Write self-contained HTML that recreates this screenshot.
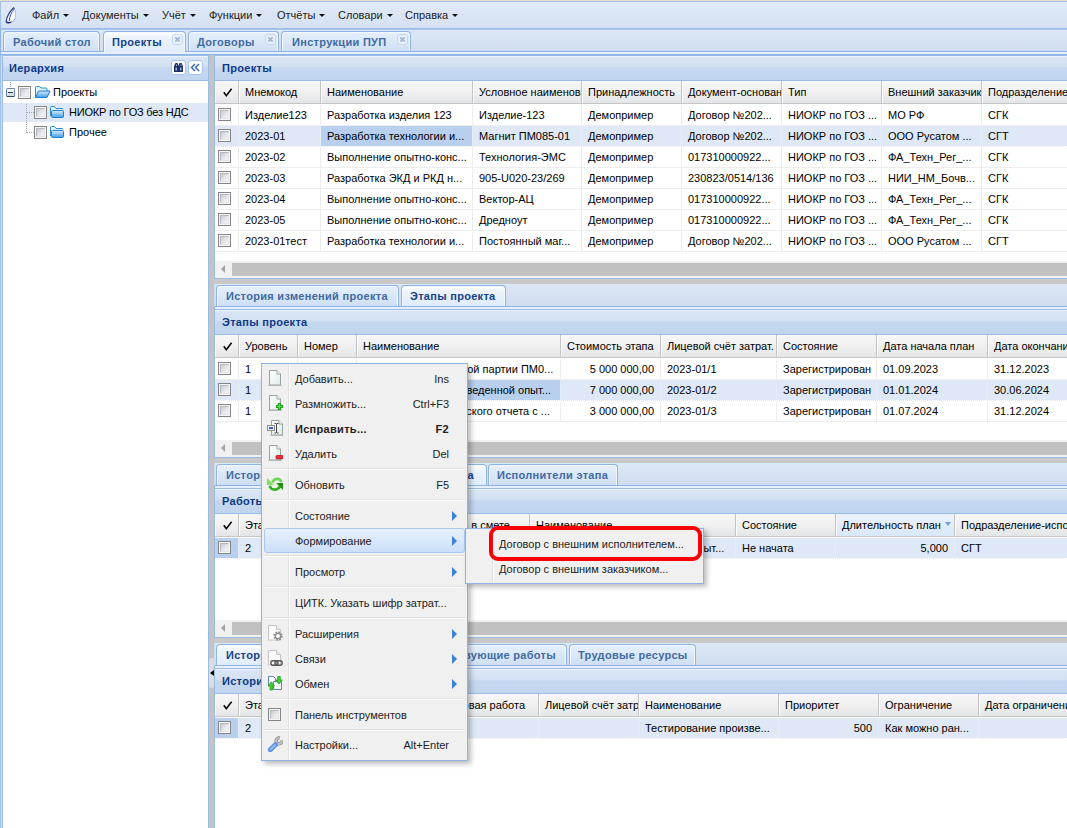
<!DOCTYPE html><html lang="ru"><head><meta charset="utf-8"><title>Проекты</title><style>
*{box-sizing:border-box;margin:0;padding:0}
html,body{width:1067px;height:828px;overflow:hidden}
body{position:relative;background:#dfe8f6;font:11px "Liberation Sans",sans-serif;color:#000}
.a{position:absolute}
.t{position:absolute;white-space:nowrap;line-height:14px;height:14px}
.b{font-weight:bold;letter-spacing:.3px}
.hd{position:absolute;border:1px solid #99bbe8;box-shadow:inset 0 1px 0 #edf3fc;background:linear-gradient(#dae6f5 0,#d3e1f3 42%,#c5d8f0 50%,#c1d5ee 100%);}
.hd .t{color:#0f3a85;font-weight:bold;letter-spacing:.3px;font-size:11px}
.gh{position:absolute;background:linear-gradient(#f7f7f7 0,#f0f0f0 50%,#e4e5e7 100%);border-bottom:1px solid #c6c6c6;overflow:hidden}
.gh .c{position:absolute;top:0;height:100%;border-right:1px solid #c4c4c4;border-left:1px solid #fbfbfb;overflow:hidden}
.gh .c span{position:absolute;left:5px;top:4px;white-space:nowrap;line-height:14px}
.row{position:absolute;left:0;height:21px;border-bottom:1px solid #ededed;background:#fff;overflow:hidden}
.row.sel{background:#dfe8f6;border-bottom:1px dotted #fff}
.cell{position:absolute;top:0;height:21px;overflow:hidden;white-space:nowrap;line-height:14px;padding:3px 0 0 6px;border-right:1px solid #ededed}
.row.sel .cell{border-right-color:#e6edf8}
.cell.r{text-align:right;padding-right:6px}
.cell.cs{background:#b8cfee}
.cb{position:absolute;width:13px;height:13px;border:1px solid #858585;background:#f6f6f6}
.cb:after{content:"";position:absolute;left:1px;top:1px;right:1px;bottom:1px;background:linear-gradient(135deg,#c6cbd2 0,#e4e6ea 55%,#f7f7f7 100%);border:1px solid;border-color:#b4b9c0 #e2e4e8 #e2e4e8 #b4b9c0}
.sb{position:absolute;background:#f1f1f1;height:17px}
.sb i{position:absolute;top:2px;height:13px;background:#c1c1c1}
.sb b{position:absolute;left:6px;top:4px;width:0;height:0;border:4px solid transparent;border-right:4.500px solid #a3a3a3;border-left:0}
.tabstrip{position:absolute;background:linear-gradient(#dde8f6,#d0ddf0);border-bottom:1px solid #8db2e3}
.tab{position:absolute;border:1px solid #8db2e3;border-bottom:0;border-radius:4px 4px 0 0;background:linear-gradient(#e6f0fc 0,#dce9f9 40%,#cfdff4 100%);box-shadow:inset 1px 1px 0 #f4f9ff,inset -1px 0 0 #f4f9ff}
.tab.act{background:linear-gradient(#fff 0,#ecf3fc 30%,#deecfd 100%)}
.tab .t{color:#416aa3;font-weight:bold;letter-spacing:.3px}
.tab.act .t{color:#15428b}
.menu{position:absolute;background:#f0f0f0;border:1px solid #8fb2e6;box-shadow:3px 3px 5px rgba(0,0,0,.26)}
.menu .gut{position:absolute;left:26px;top:1px;bottom:1px;width:2px;border-left:1px solid #e0e0e0;border-right:1px solid #fff}
.menu .sep{position:absolute;left:2px;right:2px;height:2px;border-top:1px solid #e0e0e0;border-bottom:1px solid #fff}
.menu .t{color:#222}
.arr{position:absolute;width:0;height:0;border:5px solid transparent;border-left:5.500px solid #3f7fd6;border-right:0}
</style></head><body>
<svg width="0" height="0" style="position:absolute"><defs><linearGradient id="pg" x1="0" y1="0" x2="1" y2="1"><stop offset="0" stop-color="#fff"/><stop offset="1" stop-color="#dfe9e9"/></linearGradient><linearGradient id="fo" x1="0" y1="0" x2="0" y2="1"><stop offset="0" stop-color="#d9eefc"/><stop offset="1" stop-color="#3f9ce8"/></linearGradient></defs></svg>
<div class="a" style="left:0;top:0;width:1067px;height:1px;background:#e9dfc9"></div>
<div class="a" style="left:0;top:29px;width:1px;height:799px;background:#a3c0e8"></div><div class="a" style="left:1px;top:55px;width:1px;height:773px;background:#cfdff5"></div>
<div class="a" style="left:0;top:1px;width:1067px;height:28px;background:linear-gradient(#e0e9f6,#d5e1f2);border-bottom:1px solid #9dbbe8;border-top:1px solid #a5c1ea;border-left:1px solid #a3c0e8"></div>
<svg class="a" style="left:5px;top:6px" width="12" height="18" viewBox="0 0 12 18"><path d="M9 1.500C5 5 2 10 1 15.500c2 1.500 5 1 9-2.500 .5-4 .5-8-1-11.500z" fill="#fbfcfe"/><path d="M9 1.500c1.800 3.500 1.800 7.500 1 11.500" fill="none" stroke="#b4bccb" stroke-width=".9"/><path d="M6 16c2-.5 3-1.500 4-3" fill="none" stroke="#7f8ccc" stroke-width=".9"/><path d="M9 1.500C5 5 2 10 1 15.500" fill="none" stroke="#2b3f92" stroke-width="1.200"/><path d="M9.500 2.500C6.500 6 4.500 10.500 4.200 15" fill="none" stroke="#3a55a5" stroke-width="1"/><path d="M1 15.500c1.500 1.600 3.800 1.300 5 .5" fill="none" stroke="#14208a" stroke-width="1.500"/></svg>
<div class="t" style="left:32px;top:8px;color:#222">Файл<i style="display:inline-block;width:0;height:0;border:3px solid transparent;border-top:3px solid #111;border-bottom:0;margin-left:4px;position:relative;top:-2px"></i></div>
<div class="t" style="left:82px;top:8px;color:#222">Документы<i style="display:inline-block;width:0;height:0;border:3px solid transparent;border-top:3px solid #111;border-bottom:0;margin-left:4px;position:relative;top:-2px"></i></div>
<div class="t" style="left:162px;top:8px;color:#222">Учёт<i style="display:inline-block;width:0;height:0;border:3px solid transparent;border-top:3px solid #111;border-bottom:0;margin-left:4px;position:relative;top:-2px"></i></div>
<div class="t" style="left:209px;top:8px;color:#222">Функции<i style="display:inline-block;width:0;height:0;border:3px solid transparent;border-top:3px solid #111;border-bottom:0;margin-left:4px;position:relative;top:-2px"></i></div>
<div class="t" style="left:277px;top:8px;color:#222">Отчёты<i style="display:inline-block;width:0;height:0;border:3px solid transparent;border-top:3px solid #111;border-bottom:0;margin-left:4px;position:relative;top:-2px"></i></div>
<div class="t" style="left:338px;top:8px;color:#222">Словари<i style="display:inline-block;width:0;height:0;border:3px solid transparent;border-top:3px solid #111;border-bottom:0;margin-left:4px;position:relative;top:-2px"></i></div>
<div class="t" style="left:405px;top:8px;color:#222">Справка<i style="display:inline-block;width:0;height:0;border:3px solid transparent;border-top:3px solid #111;border-bottom:0;margin-left:4px;position:relative;top:-2px"></i></div>
<div class="tabstrip" style="left:0;top:29px;width:1067px;height:23px;border-left:1px solid #8db2e3;border-top:1px solid #a9c4ea"></div>
<div class="a" style="left:0;top:52px;width:1067px;height:3px;background:#e6f0fd;border-left:1px solid #8db2e3;border-bottom:1px solid #8fb3e4"></div>
<div class="tab" style="left:3px;top:31px;width:97px;height:20px"><div class="t" style="left:9px;top:3px">Рабочий стол</div></div>
<div class="tab act" style="left:103px;top:31px;width:83px;height:21px"><div class="t" style="left:8px;top:3px">Проекты</div><svg class="a" style="right:2px;top:2px" width="11" height="11" viewBox="0 0 11 11"><rect x=".5" y=".5" width="10" height="10" rx="2.500" fill="#eaf1fb" stroke="#c3d6ee"/><path d="M3.300 3.300l4.400 4.400M7.700 3.300l-4.400 4.400" stroke="#9db6d8" stroke-width="1.700"/></svg></div>
<div class="tab" style="left:188px;top:31px;width:91px;height:20px"><div class="t" style="left:8px;top:3px">Договоры</div><svg class="a" style="right:2px;top:2px" width="11" height="11" viewBox="0 0 11 11"><rect x=".5" y=".5" width="10" height="10" rx="2.500" fill="#eaf1fb" stroke="#c3d6ee"/><path d="M3.300 3.300l4.400 4.400M7.700 3.300l-4.400 4.400" stroke="#9db6d8" stroke-width="1.700"/></svg></div>
<div class="tab" style="left:281px;top:31px;width:130px;height:20px"><div class="t" style="left:10px;top:3px">Инструкции ПУП</div><svg class="a" style="right:2px;top:2px" width="11" height="11" viewBox="0 0 11 11"><rect x=".5" y=".5" width="10" height="10" rx="2.500" fill="#eaf1fb" stroke="#c3d6ee"/><path d="M3.300 3.300l4.400 4.400M7.700 3.300l-4.400 4.400" stroke="#9db6d8" stroke-width="1.700"/></svg></div>
<div class="hd" style="left:2px;top:55px;width:207px;height:26px"><div class="t" style="left:6px;top:5px">Иерархия</div>
<svg class="a" style="left:168px;top:4px" width="15" height="15" viewBox="0 0 15 15"><rect x=".5" y=".5" width="14" height="14" rx="2.500" fill="#fff" stroke="#a4c2ec"/><path d="M4.500 3h2l1 3v6h-4.500V6zM8.500 3h2l1.500 3v6H7.500V6z" fill="#1f2f5e"/><path d="M4.500 7.500h1.500v3h-1.500zM9 7.500h1.500v3H9zM5 4.500h1v1.500H5zM9.500 4.500h1v1.500h-1z" fill="#9bb5f0"/></svg>
<svg class="a" style="left:185px;top:4px" width="15" height="15" viewBox="0 0 15 15"><rect x=".5" y=".5" width="14" height="14" rx="2.500" fill="#fff" stroke="#a4c2ec"/><path d="M7 4l-3.500 3.500L7 11M11 4l-3.500 3.500L11 11" fill="none" stroke="#2f62b0" stroke-width="1.400"/></svg>
</div>
<div class="a" style="left:2px;top:81px;width:207px;height:747px;background:#fff;border-left:1px solid #99bbe8;border-right:1px solid #99bbe8"></div>
<div class="a" style="left:3px;top:103px;width:205px;height:19px;background:#dfe8f6"></div>
<div class="a" style="left:10px;top:82px;width:0;height:5px;border-left:1px dotted #aaa"></div>
<div class="a" style="left:6px;top:88px;width:9px;height:9px;border:1px solid #6f86ab;border-bottom-color:#2f4777;border-radius:1.500px;background:linear-gradient(#fff,#cdd7e6)"><div class="a" style="left:1px;top:3px;width:5px;height:1px;background:#223a63"></div></div>
<div class="cb" style="left:18px;top:86px"></div>
<svg class="a" style="left:34px;top:85px" width="17" height="14" viewBox="0 0 17 14"><path d="M1.500 12V2.500c0-.6.400-1 1-1h3l1.500 1.500h5c.6 0 1 .4 1 1v2" fill="#e8f4fd" stroke="#2b8bd8"/><path d="M1.500 12.500L4.500 6h11.500l-3 6.500z" fill="url(#fo)" stroke="#1d7fd0" stroke-linejoin="round"/></svg>
<div class="t" style="left:53px;top:85px">Проекты</div>
<div class="a" style="left:26px;top:104px;width:0;height:29px;border-left:1px dotted #aaa"></div>
<div class="a" style="left:26px;top:112px;width:8px;height:0;border-top:1px dotted #aaa"></div>
<div class="a" style="left:26px;top:132px;width:8px;height:0;border-top:1px dotted #aaa"></div>
<div class="cb" style="left:34px;top:106px"></div>
<svg class="a" style="left:49px;top:105px" width="16" height="14" viewBox="0 0 16 14"><path d="M1.500 11V2.500c0-.6.400-1 1-1h3l1.500 2h6c.6 0 1 .4 1 1" fill="#e8f4fd" stroke="#2b8bd8"/><rect x="2.500" y="5.500" width="12" height="7" rx="1.200" fill="url(#fo)" stroke="#1d7fd0"/></svg>
<div class="t" style="left:69px;top:105px;letter-spacing:-.2px">НИОКР по ГОЗ без НДС</div>
<div class="cb" style="left:34px;top:126px"></div>
<svg class="a" style="left:49px;top:125px" width="16" height="14" viewBox="0 0 16 14"><path d="M1.500 11V2.500c0-.6.400-1 1-1h3l1.500 2h6c.6 0 1 .4 1 1" fill="#e8f4fd" stroke="#2b8bd8"/><rect x="2.500" y="5.500" width="12" height="7" rx="1.200" fill="url(#fo)" stroke="#1d7fd0"/></svg>
<div class="t" style="left:69px;top:125px">Прочее</div>
<div class="a" style="left:209px;top:55px;width:5px;height:773px;background:#c4c4c4"></div>
<div class="a" style="left:209px;top:658px;width:5px;height:30px;background:#dcdcdc;border-radius:2px"></div><div class="a" style="left:210px;top:670px;width:0;height:0;border:3.500px solid transparent;border-right:4px solid #000;border-left:0"></div>
<div class="hd" style="left:214px;top:55px;width:860px;height:26px"><div class="t" style="left:7px;top:5px">Проекты</div></div>
<div class="a" style="left:214px;top:81px;width:860px;height:198px;background:#fff;border-left:1px solid #99bbe8;border-bottom:1px solid #99bbe8;overflow:hidden">
<div class="gh" style="left:0;top:0px;width:860px;height:23px"><div class="c" style="left:0px;width:24px"><svg class="a" style="left:6px;top:6px" width="11" height="11" viewBox="0 0 11 11"><path d="M1.800 5.200L4.300 8.800 9.600 1.800" fill="none" stroke="#000" stroke-width="1.500"/></svg></div><div class="c" style="left:24px;width:82px"><span>Мнемокод</span></div><div class="c" style="left:106px;width:152px"><span>Наименование</span></div><div class="c" style="left:258px;width:109px"><span>Условное наименова</span></div><div class="c" style="left:367px;width:100px"><span>Принадлежность</span></div><div class="c" style="left:467px;width:100px"><span>Документ-основан</span></div><div class="c" style="left:567px;width:100px"><span>Тип</span></div><div class="c" style="left:667px;width:100px"><span>Внешний заказчик</span></div><div class="c" style="left:767px;width:101px"><span>Подразделение</span></div></div>
<div class="row" style="top:24px;width:860px"><div class="cell" style="left:0px;width:24px"><div class="cb" style="left:3px;top:3px"></div></div><div class="cell" style="left:24px;width:82px">Изделие123</div><div class="cell" style="left:106px;width:152px">Разработка изделия 123</div><div class="cell" style="left:258px;width:109px">Изделие-123</div><div class="cell" style="left:367px;width:100px">Демопример</div><div class="cell" style="left:467px;width:100px">Договор №202...</div><div class="cell" style="left:567px;width:100px">НИОКР по ГОЗ ...</div><div class="cell" style="left:667px;width:100px">МО РФ</div><div class="cell" style="left:767px;width:101px">СГК</div></div>
<div class="row sel" style="top:45px;width:860px"><div class="cell" style="left:0px;width:24px"><div class="cb" style="left:3px;top:3px"></div></div><div class="cell" style="left:24px;width:82px">2023-01</div><div class="cell cs" style="left:106px;width:152px">Разработка технологии и...</div><div class="cell" style="left:258px;width:109px">Магнит ПМ085-01</div><div class="cell" style="left:367px;width:100px">Демопример</div><div class="cell" style="left:467px;width:100px">Договор №202...</div><div class="cell" style="left:567px;width:100px">НИОКР по ГОЗ ...</div><div class="cell" style="left:667px;width:100px">ООО Русатом ...</div><div class="cell" style="left:767px;width:101px">СГТ</div></div>
<div class="row" style="top:66px;width:860px"><div class="cell" style="left:0px;width:24px"><div class="cb" style="left:3px;top:3px"></div></div><div class="cell" style="left:24px;width:82px">2023-02</div><div class="cell" style="left:106px;width:152px">Выполнение опытно-конс...</div><div class="cell" style="left:258px;width:109px">Технология-ЭМС</div><div class="cell" style="left:367px;width:100px">Демопример</div><div class="cell" style="left:467px;width:100px">017310000922...</div><div class="cell" style="left:567px;width:100px">НИОКР по ГОЗ ...</div><div class="cell" style="left:667px;width:100px">ФА_Техн_Рег_...</div><div class="cell" style="left:767px;width:101px">СГК</div></div>
<div class="row" style="top:87px;width:860px"><div class="cell" style="left:0px;width:24px"><div class="cb" style="left:3px;top:3px"></div></div><div class="cell" style="left:24px;width:82px">2023-03</div><div class="cell" style="left:106px;width:152px">Разработка ЭКД и РКД н...</div><div class="cell" style="left:258px;width:109px">905-U020-23/269</div><div class="cell" style="left:367px;width:100px">Демопример</div><div class="cell" style="left:467px;width:100px">230823/0514/136</div><div class="cell" style="left:567px;width:100px">НИОКР по ГОЗ ...</div><div class="cell" style="left:667px;width:100px">НИИ_НМ_Бочв...</div><div class="cell" style="left:767px;width:101px">СГК</div></div>
<div class="row" style="top:108px;width:860px"><div class="cell" style="left:0px;width:24px"><div class="cb" style="left:3px;top:3px"></div></div><div class="cell" style="left:24px;width:82px">2023-04</div><div class="cell" style="left:106px;width:152px">Выполнение опытно-конс...</div><div class="cell" style="left:258px;width:109px">Вектор-АЦ</div><div class="cell" style="left:367px;width:100px">Демопример</div><div class="cell" style="left:467px;width:100px">017310000922...</div><div class="cell" style="left:567px;width:100px">НИОКР по ГОЗ ...</div><div class="cell" style="left:667px;width:100px">ФА_Техн_Рег_...</div><div class="cell" style="left:767px;width:101px">СГК</div></div>
<div class="row" style="top:129px;width:860px"><div class="cell" style="left:0px;width:24px"><div class="cb" style="left:3px;top:3px"></div></div><div class="cell" style="left:24px;width:82px">2023-05</div><div class="cell" style="left:106px;width:152px">Выполнение опытно-конс...</div><div class="cell" style="left:258px;width:109px">Дредноут</div><div class="cell" style="left:367px;width:100px">Демопример</div><div class="cell" style="left:467px;width:100px">017310000922...</div><div class="cell" style="left:567px;width:100px">НИОКР по ГОЗ ...</div><div class="cell" style="left:667px;width:100px">ФА_Техн_Рег_...</div><div class="cell" style="left:767px;width:101px">СГК</div></div>
<div class="row" style="top:150px;width:860px"><div class="cell" style="left:0px;width:24px"><div class="cb" style="left:3px;top:3px"></div></div><div class="cell" style="left:24px;width:82px">2023-01тест</div><div class="cell" style="left:106px;width:152px">Разработка технологии и...</div><div class="cell" style="left:258px;width:109px">Постоянный маг...</div><div class="cell" style="left:367px;width:100px">Демопример</div><div class="cell" style="left:467px;width:100px">Договор №202...</div><div class="cell" style="left:567px;width:100px">НИОКР по ГОЗ ...</div><div class="cell" style="left:667px;width:100px">ООО Русатом ...</div><div class="cell" style="left:767px;width:101px">СГТ</div></div>
<div class="sb" style="left:0;top:180px;width:860px"><b></b><i style="left:17px;width:860px"></i></div>
</div>
<div class="a" style="left:214px;top:279px;width:860px;height:5px;background:#c8c8c8"></div>
<div class="tabstrip" style="left:214px;top:284px;width:860px;height:23px;border-left:1px solid #c9d9ef"></div>
<div class="a" style="left:214px;top:307px;width:860px;height:2px;background:#e6f0fd;border-left:1px solid #8db2e3"></div>
<div class="tab" style="left:216px;top:285px;width:183px;height:21px"><div class="t" style="left:9px;top:3px">История изменений проекта</div></div>
<div class="tab act" style="left:401px;top:285px;width:105px;height:21px"><div class="t" style="left:8px;top:3px">Этапы проекта</div></div>
<div class="hd" style="left:214px;top:309px;width:860px;height:26px"><div class="t" style="left:7px;top:5px">Этапы проекта</div></div>
<div class="a" style="left:214px;top:335px;width:860px;height:123px;background:#fff;border-left:1px solid #99bbe8;border-bottom:1px solid #99bbe8;overflow:hidden">
<div class="gh" style="left:0;top:0px;width:860px;height:23px"><div class="c" style="left:0px;width:24px"><svg class="a" style="left:6px;top:6px" width="11" height="11" viewBox="0 0 11 11"><path d="M1.800 5.200L4.300 8.800 9.600 1.800" fill="none" stroke="#000" stroke-width="1.500"/></svg></div><div class="c" style="left:24px;width:59px"><span>Уровень</span></div><div class="c" style="left:83px;width:59px"><span>Номер</span></div><div class="c" style="left:142px;width:204px"><span>Наименование</span></div><div class="c" style="left:346px;width:100px"><span>Стоимость этапа</span></div><div class="c" style="left:446px;width:116px"><span>Лицевой счёт затрат.</span></div><div class="c" style="left:562px;width:100px"><span>Состояние</span></div><div class="c" style="left:662px;width:111px"><span>Дата начала план</span></div><div class="c" style="left:773px;width:110px"><span>Дата окончани</span></div></div>
<div class="row" style="top:24px;width:860px"><div class="cell" style="left:0px;width:24px"><div class="cb" style="left:3px;top:3px"></div></div><div class="cell" style="left:24px;width:59px">1</div><div class="cell" style="left:83px;width:59px">1</div><div class="cell r" style="left:142px;width:204px;padding-right:8px">Изготовление опытной партии ПМ0...</div><div class="cell r" style="left:346px;width:100px">5 000 000,00</div><div class="cell" style="left:446px;width:116px">2023-01/1</div><div class="cell" style="left:562px;width:100px">Зарегистрирован</div><div class="cell" style="left:662px;width:111px">01.09.2023</div><div class="cell" style="left:773px;width:110px">31.12.2023</div></div>
<div class="row sel" style="top:45px;width:860px"><div class="cell" style="left:0px;width:24px"><div class="cb" style="left:3px;top:3px"></div></div><div class="cell" style="left:24px;width:59px">1</div><div class="cell" style="left:83px;width:59px">2</div><div class="cell cs r" style="left:142px;width:204px;padding-right:9px">Испытания произведенной опыт...</div><div class="cell r" style="left:346px;width:100px">7 000 000,00</div><div class="cell" style="left:446px;width:116px">2023-01/2</div><div class="cell" style="left:562px;width:100px">Зарегистрирован</div><div class="cell" style="left:662px;width:111px">01.01.2024</div><div class="cell" style="left:773px;width:110px">30.06.2024</div></div>
<div class="row" style="top:66px;width:860px"><div class="cell" style="left:0px;width:24px"><div class="cb" style="left:3px;top:3px"></div></div><div class="cell" style="left:24px;width:59px">1</div><div class="cell" style="left:83px;width:59px">3</div><div class="cell r" style="left:142px;width:204px;padding-right:10px">Разработка технического отчета с ...</div><div class="cell r" style="left:346px;width:100px">3 000 000,00</div><div class="cell" style="left:446px;width:116px">2023-01/3</div><div class="cell" style="left:562px;width:100px">Зарегистрирован</div><div class="cell" style="left:662px;width:111px">01.07.2024</div><div class="cell" style="left:773px;width:110px">31.12.2024</div></div>
<div class="sb" style="left:0;top:105px;width:860px"><b></b><i style="left:17px;width:860px"></i></div>
</div>
<div class="a" style="left:214px;top:458px;width:860px;height:5px;background:#c8c8c8"></div>
<div class="tabstrip" style="left:214px;top:463px;width:860px;height:23px;border-left:1px solid #c9d9ef"></div>
<div class="a" style="left:214px;top:486px;width:860px;height:2px;background:#e6f0fd;border-left:1px solid #8db2e3"></div>
<div class="tab" style="left:216px;top:464px;width:175px;height:21px"><div class="t" style="left:9px;top:3px">История изменений этапа</div></div>
<div class="tab act" style="left:393px;top:464px;width:94px;height:21px"><div class="t" style="right:12px;top:3px">Работы этапа</div></div>
<div class="tab" style="left:488px;top:464px;width:130px;height:21px"><div class="t" style="left:8px;top:3px">Исполнители этапа</div></div>
<div class="hd" style="left:214px;top:488px;width:860px;height:26px"><div class="t" style="left:7px;top:5px">Работы этапа</div></div>
<div class="a" style="left:214px;top:514px;width:860px;height:124px;background:#fff;border-left:1px solid #99bbe8;border-bottom:1px solid #99bbe8;overflow:hidden">
<div class="gh" style="left:0;top:0px;width:860px;height:23px"><div class="c" style="left:0px;width:24px"><svg class="a" style="left:6px;top:6px" width="11" height="11" viewBox="0 0 11 11"><path d="M1.800 5.200L4.300 8.800 9.600 1.800" fill="none" stroke="#000" stroke-width="1.500"/></svg></div><div class="c" style="left:24px;width:59px"><span>Этап</span></div><div class="c" style="left:83px;width:82px"><span>Номер</span></div><div class="c" style="left:165px;width:150px"><span style="left:auto;right:19px">Учитывать в смете</span></div><div class="c" style="left:315px;width:206px"><span>Наименование</span></div><div class="c" style="left:521px;width:100px"><span>Состояние</span></div><div class="c" style="left:621px;width:119px;background:linear-gradient(#ebf3fd,#d9e8fb)"><span>Длительность план</span><i class="a" style="right:3px;top:8px;width:0;height:0;border:3.500px solid transparent;border-top:4.500px solid #6d9fdc;border-bottom:0"></i></div><div class="c" style="left:740px;width:119px"><span>Подразделение-испо</span></div></div>
<div class="row sel" style="top:24px;width:860px"><div class="cell cs" style="left:0px;width:24px"><div class="cb" style="left:3px;top:3px"></div></div><div class="cell" style="left:24px;width:59px">2</div><div class="cell" style="left:83px;width:82px">2.1</div><div class="cell" style="left:165px;width:150px">Да</div><div class="cell r" style="left:315px;width:206px;padding-right:11px">Тестирование произведенной опыт...</div><div class="cell" style="left:521px;width:100px">Не начата</div><div class="cell r" style="left:621px;width:119px">5,000</div><div class="cell" style="left:740px;width:119px">СГТ</div></div>
<div class="sb" style="left:0;top:106px;width:860px"><b></b><i style="left:17px;width:860px"></i></div>
</div>
<div class="a" style="left:214px;top:638px;width:860px;height:5px;background:#c8c8c8"></div>
<div class="tabstrip" style="left:214px;top:643px;width:860px;height:23px;border-left:1px solid #c9d9ef"></div>
<div class="a" style="left:214px;top:666px;width:860px;height:2px;background:#e6f0fd;border-left:1px solid #8db2e3"></div>
<div class="tab act" style="left:216px;top:644px;width:179px;height:21px"><div class="t" style="left:9px;top:3px">История изменений работы</div></div>
<div class="tab" style="left:397px;top:644px;width:170px;height:21px"><div class="t" style="right:10px;top:3px">Предшествующие работы</div></div>
<div class="tab" style="left:569px;top:644px;width:127px;height:21px"><div class="t" style="left:8px;top:3px">Трудовые ресурсы</div></div>
<div class="hd" style="left:214px;top:668px;width:860px;height:26px"><div class="t" style="left:7px;top:5px">История изменений работы</div></div>
<div class="a" style="left:214px;top:694px;width:860px;height:136px;background:#fff;border-left:1px solid #99bbe8;border-bottom:1px solid #99bbe8;overflow:hidden">
<div class="gh" style="left:0;top:0px;width:860px;height:23px"><div class="c" style="left:0px;width:24px"><svg class="a" style="left:6px;top:6px" width="11" height="11" viewBox="0 0 11 11"><path d="M1.800 5.200L4.300 8.800 9.600 1.800" fill="none" stroke="#000" stroke-width="1.500"/></svg></div><div class="c" style="left:24px;width:59px"><span>Этап</span></div><div class="c" style="left:83px;width:122px"><span>Номер</span></div><div class="c" style="left:205px;width:119px"><span style="left:auto;right:13px">Типовая работа</span></div><div class="c" style="left:324px;width:100px"><span>Лицевой счёт затр</span></div><div class="c" style="left:424px;width:140px"><span>Наименование</span></div><div class="c" style="left:564px;width:100px"><span>Приоритет</span></div><div class="c" style="left:664px;width:100px"><span>Ограничение</span></div><div class="c" style="left:764px;width:100px"><span>Дата ограничени</span></div></div>
<div class="row sel" style="top:24px;width:860px"><div class="cell cs" style="left:0px;width:24px"><div class="cb" style="left:3px;top:3px"></div></div><div class="cell" style="left:24px;width:59px">2</div><div class="cell" style="left:83px;width:122px">2.1</div><div class="cell" style="left:205px;width:119px"></div><div class="cell" style="left:324px;width:100px"></div><div class="cell" style="left:424px;width:140px">Тестирование произве...</div><div class="cell r" style="left:564px;width:100px">500</div><div class="cell" style="left:664px;width:100px">Как можно ран...</div><div class="cell" style="left:764px;width:100px"></div></div>
</div>
<div class="menu" style="left:261px;top:363px;width:207px;height:398px"><div class="gut"></div>
<div class="sep" style="top:104px"></div>
<div class="sep" style="top:135px"></div>
<div class="sep" style="top:191px"></div>
<div class="sep" style="top:222px"></div>
<div class="sep" style="top:253px"></div>
<div class="sep" style="top:334px"></div>
<div class="sep" style="top:365px"></div>
<div class="t" style="left:33px;top:8px">Добавить...</div>
<div class="t" style="right:18px;top:8px">Ins</div>
<svg class="a" style="left:5px;top:6px" width="16" height="16" viewBox="0 0 16 16"><path d="M1 15.500h14" stroke="#c9c9c9" fill="none"/><path d="M2.500 .5h7.500l3.500 3.500v11h-11z" fill="url(#pg)" stroke="#9aa3a3"/><path d="M10 .5v3.500h3.500" fill="#fff" stroke="#9aa3a3"/></svg>
<div class="t" style="left:33px;top:33px">Размножить...</div>
<div class="t" style="right:18px;top:33px">Ctrl+F3</div>
<svg class="a" style="left:5px;top:31px" width="16" height="16" viewBox="0 0 16 16"><path d="M1 15.500h14" stroke="#c9c9c9" fill="none"/><path d="M2.500 .5h7.500l3.500 3.500v11h-11z" fill="url(#pg)" stroke="#9aa3a3"/><path d="M10 .5v3.500h3.500" fill="#fff" stroke="#9aa3a3"/><path d="M12.500 8v7M9 11.500h7" stroke="#1f9a1b" stroke-width="3.200"/><path d="M12.500 9v5M10 11.500h5" stroke="#5fe04f" stroke-width="1.200"/></svg>
<div class="t" style="left:33px;top:58px;font-weight:bold;letter-spacing:.3px">Исправить...</div>
<div class="t" style="right:18px;top:58px;font-weight:bold;letter-spacing:.3px">F2</div>
<svg class="a" style="left:5px;top:56px" width="16" height="16" viewBox="0 0 16 16"><path d="M3 15.500h13" stroke="#c9c9c9" fill="none"/><path d="M4.500 .5h7.500l3.500 3.500v11h-11z" fill="url(#pg)" stroke="#9aa3a3"/><path d="M12 .5v3.500h3.500" fill="#fff" stroke="#9aa3a3"/><rect x=".5" y="5.500" width="7" height="5" fill="#f4f4f4" stroke="#8a8a8a"/><rect x="2" y="7.200" width="4" height="1.800" fill="#2448d8"/><path d="M7.500 3.500h1.500l.5.500.5-.5h1.500M9.500 4v8.500M7.500 13h1.500l.5-.5.500.5h1.500" stroke="#333" stroke-width=".9" fill="none"/></svg>
<div class="t" style="left:33px;top:83px">Удалить</div>
<div class="t" style="right:18px;top:83px">Del</div>
<svg class="a" style="left:5px;top:81px" width="16" height="16" viewBox="0 0 16 16"><path d="M1 15.500h14" stroke="#c9c9c9" fill="none"/><path d="M2.500 .5h7.500l3.500 3.500v11h-11z" fill="url(#pg)" stroke="#9aa3a3"/><path d="M10 .5v3.500h3.500" fill="#fff" stroke="#9aa3a3"/><rect x="9" y="10.500" width="7" height="3.400" rx="1" fill="#e8343a" stroke="#b8151b" stroke-width=".8"/></svg>
<div class="t" style="left:33px;top:114px">Обновить</div>
<div class="t" style="right:18px;top:114px">F5</div>
<svg class="a" style="left:5px;top:112px" width="16" height="16" viewBox="0 0 16 16"><path d="M5.500 6.500C7 2 12.500 1.500 14.500 6" fill="none" stroke="#6fd653" stroke-width="2.600"/><path d="M0 2v7h7z" fill="#7be35f"/><path d="M2.500 10c2 4.500 7.500 5 10.500.5" fill="none" stroke="#35b022" stroke-width="2.600"/><path d="M16 7v7l-7-7z" fill="#1f9212"/></svg>
<div class="t" style="left:33px;top:145px">Состояние</div>
<div class="arr" style="left:190px;top:147px"></div>
<div class="a" style="left:2px;top:164px;width:201px;height:25px;border:1px solid #a9c7f3;border-radius:3px;background:linear-gradient(#e8f1fc,#cbdff8)"></div>
<div class="t" style="left:33px;top:170px">Формирование</div>
<div class="arr" style="left:190px;top:172px"></div>
<div class="t" style="left:33px;top:201px">Просмотр</div>
<div class="arr" style="left:190px;top:203px"></div>
<div class="t" style="left:33px;top:232px">ЦИТК. Указать шифр затрат...</div>
<div class="t" style="left:33px;top:263px">Расширения</div>
<div class="arr" style="left:190px;top:265px"></div>
<svg class="a" style="left:5px;top:261px" width="16" height="16" viewBox="0 0 16 16"><path d="M1.500 .5h8l4 4v10.500h-12z" fill="#fcfcfc" stroke="#c4c4c4"/><path d="M9.500 .5v4h4" fill="#eee" stroke="#c4c4c4"/><circle cx="11" cy="11" r="3.600" fill="none" stroke="#8a8a8a" stroke-width="2.200" stroke-dasharray="1.500 1.320"/><circle cx="11" cy="11" r="2.600" fill="#fff" stroke="#8a8a8a" stroke-width="1.200"/></svg>
<div class="t" style="left:33px;top:288px">Связи</div>
<div class="arr" style="left:190px;top:290px"></div>
<svg class="a" style="left:5px;top:286px" width="16" height="16" viewBox="0 0 16 16"><path d="M1.500 .5h8l4 4v10.500h-12z" fill="#fcfcfc" stroke="#c4c4c4"/><path d="M9.500 .5v4h4" fill="#eee" stroke="#c4c4c4"/><rect x="3.800" y="10.800" width="7" height="4.400" rx="2.200" fill="none" stroke="#555" stroke-width="1.400"/><rect x="8.200" y="10.800" width="7" height="4.400" rx="2.200" fill="none" stroke="#555" stroke-width="1.400"/><path d="M7 13h5" stroke="#777" stroke-width="1.400"/></svg>
<div class="t" style="left:33px;top:313px">Обмен</div>
<div class="arr" style="left:190px;top:315px"></div>
<svg class="a" style="left:5px;top:311px" width="16" height="16" viewBox="0 0 16 16"><path d="M1.500 1.500h5l2 2v7h-7z" fill="#fff" stroke="#5d82c4"/><path d="M6.500 6.500h8v8h-8z" fill="#f4f8ff" stroke="#5d82c4"/><path d="M10.700 1.500h2.600v3.500h2L12 9 8.700 5h2z" fill="#3fd038" stroke="#1c9a14" stroke-width=".7"/><path d="M3 15h2.600v-4h2L4.300 6.800 1 11h2z" fill="#3fd038" stroke="#1c9a14" stroke-width=".7"/></svg>
<div class="t" style="left:33px;top:344px">Панель инструментов</div>
<div class="cb" style="left:6px;top:344px"></div>
<div class="t" style="left:33px;top:374px">Настройки...</div>
<div class="t" style="right:18px;top:374px">Alt+Enter</div>
<svg class="a" style="left:5px;top:372px" width="16" height="16" viewBox="0 0 16 16"><path d="M8 9.500l2.500-2.500" stroke="#8f8f8f" stroke-width="3.400"/><path d="M14.800 4.200A2.900 2.900 0 1 1 12.800 2.200" fill="none" stroke="#858585" stroke-width="3.400"/><path d="M8 9.500l2.500-2.500" stroke="#c4c4c4" stroke-width="2"/><path d="M14.700 4.300A2.900 2.900 0 1 1 12.700 2.300" fill="none" stroke="#c4c4c4" stroke-width="2"/><path d="M8.300 8.700L3.300 13.700" stroke="#5b8fe0" stroke-width="4.800" stroke-linecap="round"/><path d="M8 9L3.700 13.300" stroke="#92b8f2" stroke-width="2.200" stroke-linecap="round"/></svg>
</div>
<div class="menu" style="left:465px;top:528px;width:239px;height:56px"><div class="gut"></div>
<div class="t" style="left:33px;top:8px">Договор с внешним исполнителем...</div>
<div class="t" style="left:33px;top:33px">Договор с внешним заказчиком...</div>
</div>
<div class="a" style="left:489px;top:526px;width:213px;height:35px;border:4px solid #fb0007;border-radius:9px"></div>
</body></html>
